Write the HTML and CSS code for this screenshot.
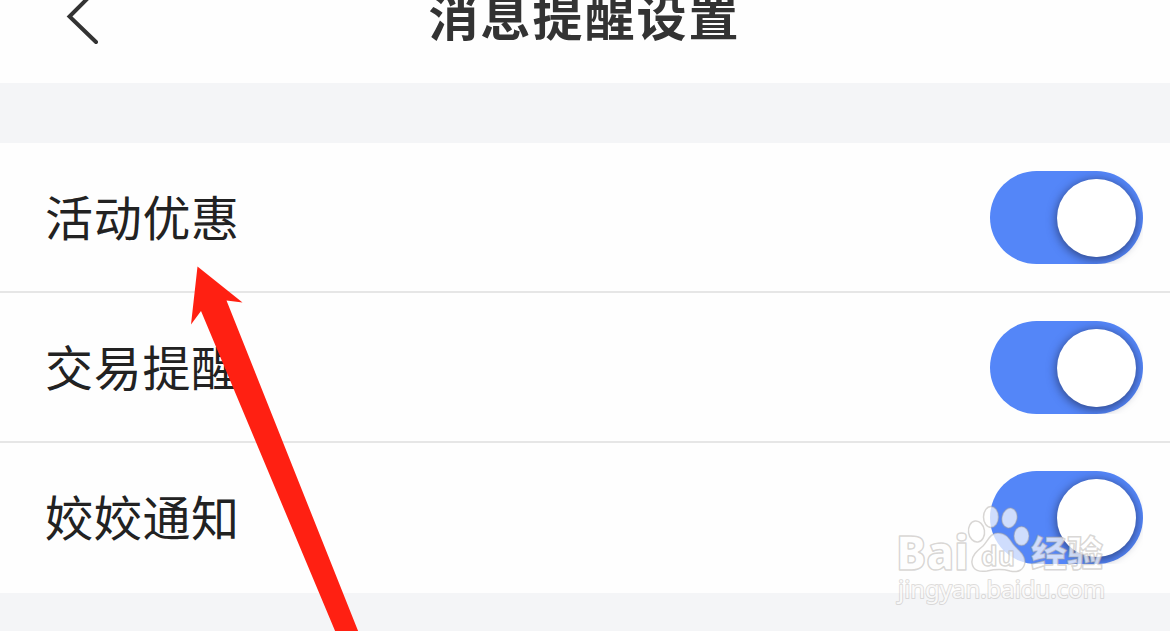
FILE: index.html
```html
<!DOCTYPE html>
<html lang="zh-CN">

<head>
    <meta charset="UTF-8">
    <meta name="viewport" content="width=device-width, initial-scale=1.0">
    <title>消息提醒设置</title>
    <link rel="stylesheet" href="styles.css">
</head>

<body>

    <header class="topbar">
        <svg class="back" width="40" height="60" viewBox="0 0 40 60">
            <path d="M37 -11 L9.500 16.500 L36 42" />
        </svg>
        <h1>消息提醒设置</h1>
    </header>

    <main class="settings">
        <div class="row">
            <span class="label">活动优惠</span>
            <span class="switch"><span class="track"><span class="knob"></span></span></span>
        </div>
        <div class="row">
            <span class="label">交易提醒</span>
            <span class="switch"><span class="track"><span class="knob"></span></span></span>
        </div>
        <div class="row">
            <span class="label">姣姣通知</span>
            <span class="switch"><span class="track"><span class="knob"></span></span></span>
        </div>
    </main>

    <svg class="arrow" width="1170" height="631" viewBox="0 0 1170 631">
        <polygon points="197.500,266.500 242.500,302.500 226.500,300.500 358.500,632 335.500,632 201,311 191,324.500" />
    </svg>

    <svg class="watermark" width="230" height="120" viewBox="890 495 230 120">
        <text class="brand" x="896" y="570" textLength="73" lengthAdjust="spacingAndGlyphs">Bai</text>
        <ellipse cx="976.500" cy="531.500" rx="8" ry="10.500" transform="rotate(-8 976.500 531.500)" />
        <ellipse cx="991" cy="517" rx="7.500" ry="10.500" />
        <ellipse cx="1009.500" cy="518" rx="7.500" ry="10" transform="rotate(12 1009.500 518)" />
        <ellipse cx="1021.500" cy="536" rx="7.500" ry="9.500" />
        <path d="M998 533 C990 533 988 541 983 546 C977 551 971 556 972 563 C973 571 980 572 987 571 C996 569 1003 569 1010 571 C1018 573 1024 570 1025 562 C1025 554 1018 550 1013 544 C1009 538 1006 533 998 533 Z" />
        <text class="du" x="981" y="566" textLength="34" lengthAdjust="spacingAndGlyphs">du</text>
        <text class="jingyan" x="1031" y="567" textLength="72" lengthAdjust="spacingAndGlyphs">经验</text>
        <text class="site" x="898" y="598" textLength="207" lengthAdjust="spacingAndGlyphs">jingyan.baidu.com</text>
    </svg>

</body>

</html>
```
FILE: styles.css
```css
body {
    margin: 0;
    height: 631px;
    position: relative;
    overflow: hidden;
    background-color: #f4f5f7;
    font-family: "Noto Sans CJK SC", sans-serif;
}

.topbar {
    display: grid;
    grid-template-columns: 60px 40px 1fr 100px;
    height: 83px;
    margin-bottom: 60px;
    background-color: #fefefe;
}

.back {
    grid-column: 2;
    fill: none;
    stroke: #333;
    stroke-width: 4;
    stroke-linecap: round;
}

h1 {
    margin: -22px 0 0 -1px;
    color: #333;
    font-size: 50px;
    font-weight: 700;
    line-height: 72px;
    letter-spacing: 2px;
    text-align: center;
}

.row {
    display: flex;
    justify-content: space-between;
    align-items: center;
    box-sizing: border-box;
    height: 150px;
    padding: 0 27px 0 45px;
    border-bottom: 2px solid #e6e6e6;
    background-color: #fefefe;
}

.row:last-child {
    border-bottom-color: #fefefe;
}

.label {
    margin-top: -4px;
    color: #222;
    font-size: 48px;
    line-height: 70px;
    letter-spacing: 0.7px;
}

/* cuts the knob shadow off at a square edge */
.switch {
    width: 153px;
    height: 93px;
    margin-top: 1px;
    overflow: hidden;
}

.track {
    display: flex;
    justify-content: flex-end;
    align-items: center;
    box-sizing: border-box;
    height: 93px;
    padding-right: 7.5px;
    border-radius: 47px;
    background-color: #5486f8;
}

.knob {
    width: 78.5px;
    height: 78.5px;
    margin-top: 1px;
    border-radius: 50%;
    background-color: #fff;
    box-shadow: 0 2px 10px 1px rgba(30, 40, 80, 0.65);
}

.arrow {
    position: absolute;
    left: 0;
    top: 0;
    fill: #ff2012;
}

/* translucent logo over the last row */
.watermark {
    position: absolute;
    left: 890px;
    top: 495px;
    fill: rgba(255, 255, 255, 0.72);
    stroke: rgba(165, 160, 155, 0.42);
    stroke-width: 1.5;
    stroke-linejoin: round;
}

.brand {
    font-family: "Open Sans", sans-serif;
    font-size: 47px;
    font-weight: 800;
}

.du {
    font-family: "Open Sans", sans-serif;
    font-size: 26px;
    font-weight: 700;
}

.jingyan {
    font-size: 36px;
    font-weight: 900;
}

.site {
    font-family: "Noto Sans", sans-serif;
    font-size: 24px;
    paint-order: stroke;
    stroke-width: 2;
    stroke: rgba(165, 160, 155, 0.35);
    fill: rgba(255, 255, 255, 0.85);
}
```
